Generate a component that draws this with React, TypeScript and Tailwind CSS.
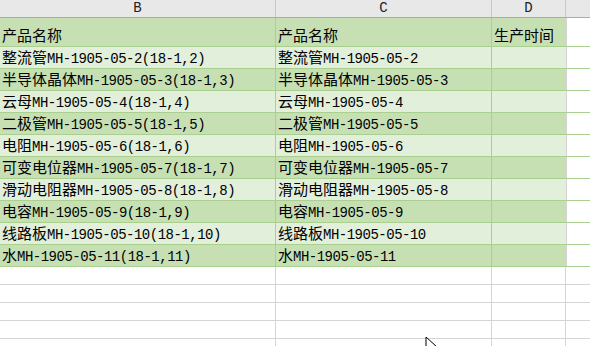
import React from "react";

// ====================== DATA ============================
const products: [string, number][] = [
  ["整流管", 2],
  ["半导体晶体", 3],
  ["云母", 4],
  ["二极管", 5],
  ["电阻", 6],
  ["可变电位器", 7],
  ["滑动电阻器", 8],
  ["电容", 9],
  ["线路板", 10],
  ["水", 11],
];

const cjk = '"Noto Sans CJK SC", sans-serif';
const mono = '"Liberation Mono", "Noto Sans CJK SC", monospace';

// ========================================================

function CellText({ zh, rest }: { zh: string; rest: string }) {
  return (
    <span className="whitespace-nowrap leading-none text-black">
      <span className="text-[15px]" style={{ fontFamily: cjk }}>
        {zh}
      </span>
      <span className="text-[14px] tracking-[-0.5px]" style={{ fontFamily: mono }}>
        {rest}
      </span>
    </span>
  );
}

function DataRow({
  shade,
  height,
  b,
  c,
  d,
}: {
  shade: string;
  height: string;
  b?: React.ReactNode;
  c?: React.ReactNode;
  d?: React.ReactNode;
}) {
  return (
    <div className={`flex ${height} border-b border-[#a9d08e]`}>
      <div
        className={`w-[276px] shrink-0 border-r border-[#a9d08e] ${shade} flex items-end pl-[2px] pb-[2px] overflow-hidden`}
      >
        {b}
      </div>
      <div
        className={`w-[216px] shrink-0 border-r border-[#a9d08e] ${shade} flex items-end pl-[2px] pb-[2px] overflow-hidden`}
      >
        {c}
      </div>
      <div className={`w-[74px] shrink-0 ${shade} flex items-end pl-[2px] pb-[2px] overflow-hidden`}>
        {d}
      </div>
      <div className="flex-1 border-l border-[#d4d4d4] bg-white" />
    </div>
  );
}

export default function App() {
  return (
    <div className="relative w-[590px] h-[346px] overflow-hidden bg-white">
      {/* ===================== COLUMN HEADERS ======================= */}
      <div
        className="flex h-[18px] bg-[#e8e8e8] border-b border-[#ababab] text-[14px] text-[#222]"
        style={{ fontFamily: mono }}
      >
        <div className="w-[276px] shrink-0 border-r border-[#c8c8c8] flex items-center justify-center">
          B
        </div>
        <div className="w-[216px] shrink-0 border-r border-[#c8c8c8] flex items-center justify-center">
          C
        </div>
        <div className="w-[74px] shrink-0 border-r border-[#c8c8c8] flex items-center justify-center">
          D
        </div>
        <div className="flex-1" />
      </div>

      {/* ===================== TITLE ROW ======================= */}
      <DataRow
        shade="bg-[#c6e0b4]"
        height="h-[29px]"
        b={<CellText zh="产品名称" rest="" />}
        c={<CellText zh="产品名称" rest="" />}
        d={<CellText zh="生产时间" rest="" />}
      />

      {/* ===================== DATA ROWS ======================= */}
      {products.map(([name, n], i) => (
        <DataRow
          key={n}
          shade={i % 2 === 0 ? "bg-[#e2efda]" : "bg-[#c6e0b4]"}
          height="h-[22px]"
          b={<CellText zh={name} rest={`MH-1905-05-${n}(18-1,${n})`} />}
          c={<CellText zh={name} rest={`MH-1905-05-${n}`} />}
        />
      ))}

      {/* ===================== EMPTY ROWS ======================= */}
      {[0, 1, 2, 3, 4].map((r) => (
        <div key={r} className="flex h-[18px] border-b border-[#d4d4d4]">
          <div className="w-[276px] shrink-0 border-r border-[#d4d4d4]" />
          <div className="w-[216px] shrink-0 border-r border-[#d4d4d4]" />
          <div className="w-[74px] shrink-0 border-r border-[#d4d4d4]" />
          <div className="flex-1" />
        </div>
      ))}

      {/* mouse pointer */}
      <svg
        className="absolute left-[425px] top-[336px]"
        width="14"
        height="20"
        viewBox="0 0 14 20"
      >
        <path d="M1 1 L1 16 L5 12 L8 19 L10 18 L7 11 L12 11 Z" fill="#fff" stroke="#000" strokeWidth="1" />
      </svg>
    </div>
  );
}
